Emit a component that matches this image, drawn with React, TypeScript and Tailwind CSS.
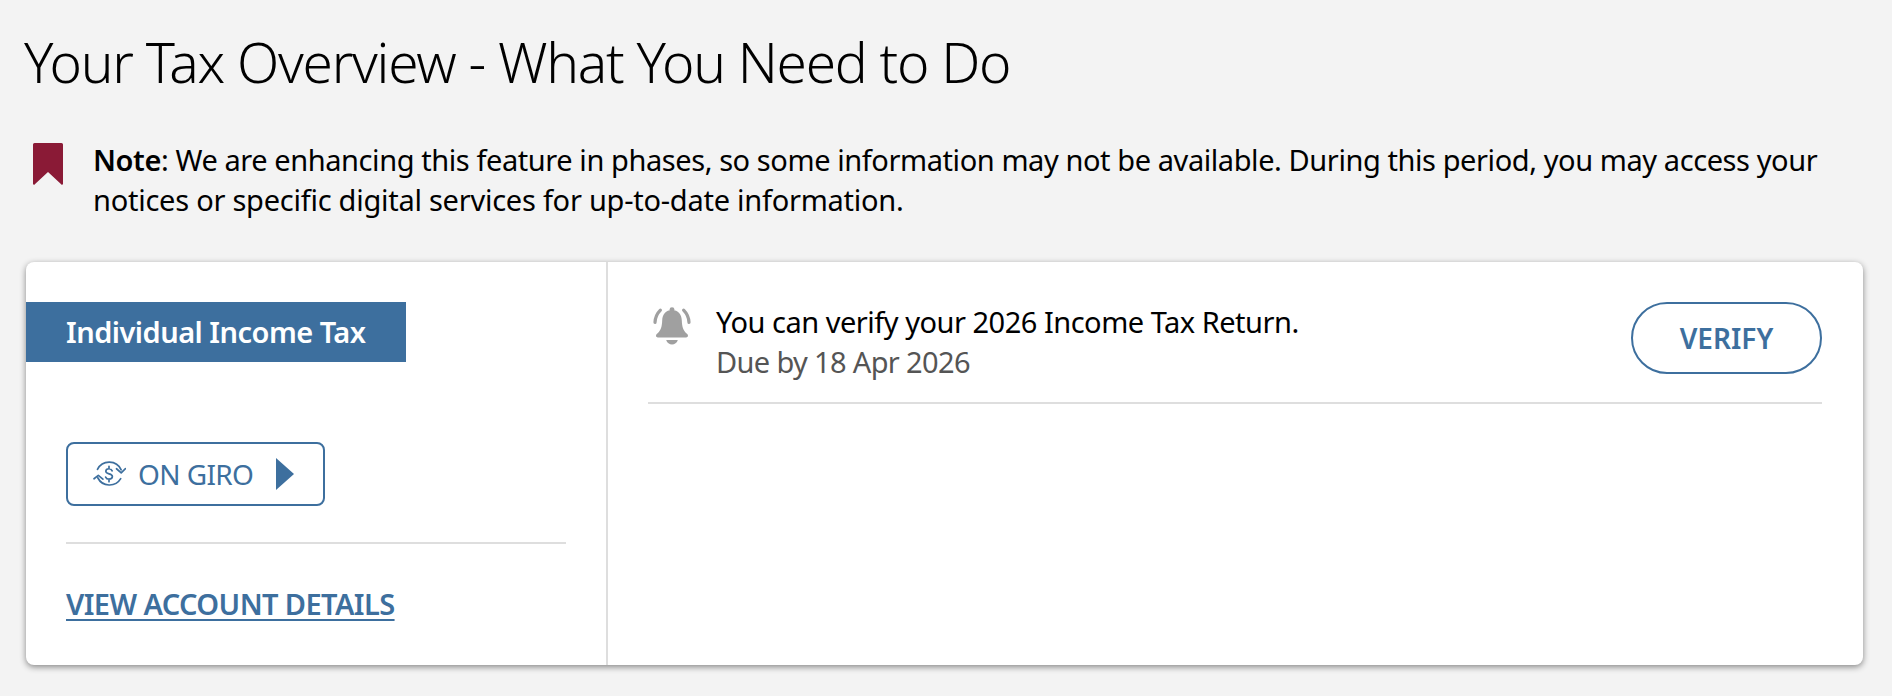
function BookmarkIcon() {
  return (
    <svg viewBox="0 0 30 42" className="h-[42px] w-[30px] shrink-0">
      <path d="M1.5 0h27A1.5 1.5 0 0 1 30 1.5V41l-1 1-14-13L1 42l-1-1V1.5A1.5 1.5 0 0 1 1.5 0z" fill="#8a1a36" />
    </svg>
  );
}

function BellIcon() {
  return (
    <svg viewBox="0 0 38 38" className="h-[38px] w-[38px] shrink-0" fill="#a0a0a0">
      <circle cx="19" cy="2.6" r="2.4" />
      <path d="M19 3c-6.2 0-9.6 4.6-9.8 10.4-.2 5.8-1.2 10-5.4 13.6-1.4 1.2-.8 3.4 1 3.4h28.4c1.8 0 2.4-2.2 1-3.4-4.2-3.6-5.2-7.8-5.4-13.6C28.6 7.6 25.2 3 19 3z" />
      <path d="M13.2 33h11.6c-.8 2.8-3.2 4.6-5.8 4.6s-5-1.8-5.8-4.6z" />
      <path d="M7.4 3.2C4 6.6 2.2 10.8 2 15.4M30.6 3.2c3.4 3.4 5.2 7.6 5.4 12.2" fill="none" stroke="#a0a0a0" strokeWidth="3.2" strokeLinecap="round" />
    </svg>
  );
}

function GiroIcon() {
  return (
    <svg viewBox="0 0 36 32" className="h-[30px] w-[34px] shrink-0" fill="none" stroke="#3d6f9e" strokeWidth="1.8" strokeLinecap="round" strokeLinejoin="round">
      <path d="M5.7 11A14 14 0 0 1 31 11.5" />
      <path d="M26 10.4l5 4.4 4.6-4.6" />
      <path d="M30.5 21A14 14 0 0 1 6 20" />
      <path d="M11.5 21.5l-4.9-4-4.6 3.6" />
      <path d="M21.4 12.6c-.6-1.4-1.9-2.2-3.4-2.2-1.9 0-3.4 1.1-3.4 2.7 0 3.7 7 1.9 7 5.6 0 1.7-1.5 2.8-3.6 2.8-1.6 0-3-.8-3.6-2.2M18 7.8v2.6M18 21.5v2.7" />
    </svg>
  );
}

export default function App() {
  return (
    <div className="h-[696px] overflow-hidden bg-[#f3f3f3] pl-[26px] font-['Noto_Sans',sans-serif] text-black">
      <h1 className="-ml-[2px] pt-[27px] text-[55px] leading-[70px] font-light tracking-[-1.25px]">
        Your Tax Overview - What You Need to Do
      </h1>

      {/* Note */}
      <div className="mt-[46px] flex gap-[30px] pl-[7px]">
        <BookmarkIcon />
        <p className="-mt-[3px] text-[29px] leading-[40px] tracking-[-0.42px]">
          <b className="font-semibold">Note</b>: We are enhancing this feature in phases, so some information may not be available. During this period, you may access your
          <br />
          <span className="tracking-[-0.25px]">notices or specific digital services for up-to-date information.</span>
        </p>
      </div>

      {/* Card */}
      <div className="mt-[42px] flex h-[403px] w-[1837px] rounded-[8px] bg-white shadow-[0_2px_6px_rgba(0,0,0,0.45)]">
        <div className="w-[582px] shrink-0 border-r-2 border-[#dedede] pt-[40px]">
          <div className="flex h-[60px] w-[380px] items-center bg-[#3d6f9e] pl-[40px] text-[29px] font-semibold tracking-[-0.52px] text-white">
            Individual Income Tax
          </div>
          <div className="mx-[40px] mt-[80px] w-[500px]">
            <a className="flex h-[64px] w-[259px] items-center rounded-[8px] border-2 border-[#3d6f9e] pl-[24px] text-[28px] tracking-[-0.6px] text-[#3d6f9e]">
              <GiroIcon />
              <span className="ml-[12px]">ON GIRO</span>
              <svg viewBox="0 0 18 32" className="ml-[23px] h-[32px] w-[18px]" fill="#3d6f9e">
                <path d="M0 0l18 16L0 32z" />
              </svg>
            </a>
            <div className="mt-[36px] border-t-2 border-[#dedede]" />
            <a className="mt-[40px] inline-block text-[29px] leading-[40px] font-semibold tracking-[-0.6px] text-[#3d6f9e] underline decoration-2 underline-offset-[4px]">
              VIEW ACCOUNT DETAILS
            </a>
          </div>
        </div>

        <div className="flex-1 pt-[40px] pr-[41px] pl-[40px]">
          <div className="flex items-start justify-between border-b-2 border-[#dedede] pb-[20px]">
            <div className="flex gap-[25px]">
              <div className="pt-[5px] pl-[5px]">
                <BellIcon />
              </div>
              <div className="text-[29px] leading-[40px] tracking-[-0.49px]">
                <p>You can verify your 2026 Income Tax Return.</p>
                <p className="tracking-[-0.65px] text-[#555555]">Due by 18 Apr 2026</p>
              </div>
            </div>
            <a className="flex h-[72px] w-[191px] items-center justify-center rounded-full border-2 border-[#3d6f9e] text-[28px] font-semibold text-[#3d6f9e]">
              VERIFY
            </a>
          </div>
        </div>
      </div>
    </div>
  );
}
